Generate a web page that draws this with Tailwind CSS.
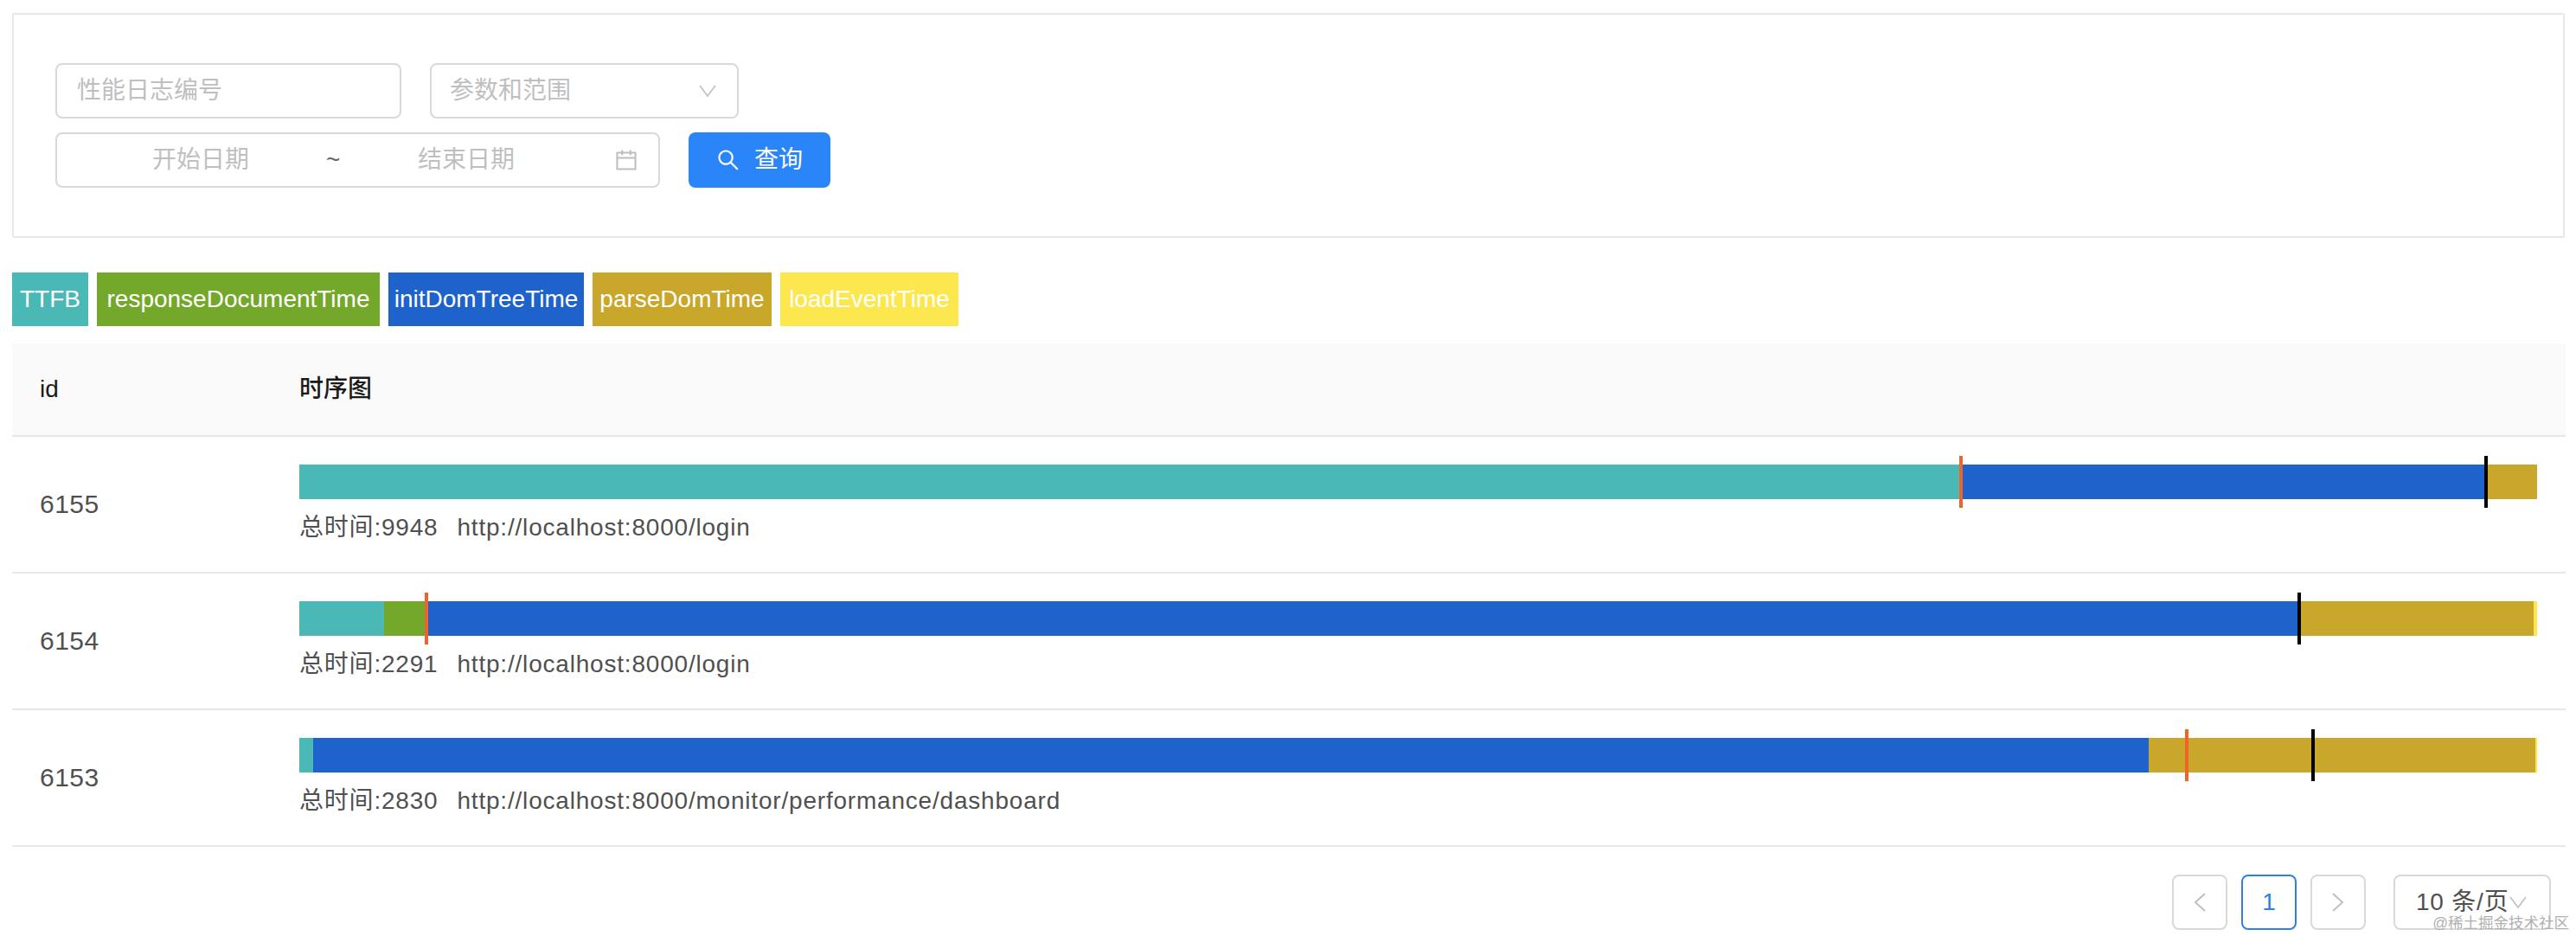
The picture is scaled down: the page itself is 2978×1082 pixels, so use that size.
<!DOCTYPE html>
<html lang="zh">
<head>
    <meta charset="UTF-8">
    <title>性能日志</title>
    <script src="https://cdn.jsdelivr.net/npm/@tailwindcss/browser@4"></script>
</head>
<body class="relative h-[1082px] overflow-hidden bg-white px-[14px] pt-[15px] text-[28px] leading-[40px] text-[#505050] font-['Liberation_Sans','Noto_Sans_CJK_SC',sans-serif]">

    <!-- Search form -->
    <div class="flex h-[260px] w-[2951px] flex-col gap-4 rounded-[2px] border-2 border-[#e8e8e8] pl-[48px] pt-[56px]">
        <div class="flex gap-[33px]">
            <div class="flex h-[64px] w-[400px] items-center rounded-lg border-2 border-[#d9d9d9] pl-[23px] text-[#bfbfbf]">性能日志编号</div>
            <div class="flex h-[64px] w-[357px] items-center justify-between rounded-lg border-2 border-[#d9d9d9] pl-[21px] pr-[24px] text-[#bfbfbf]">
                <span>参数和范围</span>
                <svg class="h-[14px] w-[20px]" viewBox="0 0 20 14" fill="none" stroke="#bfbfbf" stroke-width="1.6"><path d="M1 1l9 12 9-12"/></svg>
            </div>
        </div>
        <div class="flex gap-[33px]">
            <div class="flex h-[64px] w-[699px] items-center whitespace-nowrap rounded-lg border-2 border-[#d9d9d9] text-[#bfbfbf]">
                <span class="ml-[110px] w-[112px]">开始日期</span>
                <span class="ml-[89px] w-[18px] text-[#666]">~</span>
                <span class="ml-[88px] w-[112px]">结束日期</span>
                <svg class="ml-[116px] h-[26px] w-[26px]" viewBox="64 64 896 896" fill="#bfbfbf"><path d="M880 184H712v-64c0-4.4-3.6-8-8-8h-56c-4.4 0-8 3.6-8 8v64H384v-64c0-4.4-3.6-8-8-8h-56c-4.4 0-8 3.6-8 8v64H144c-17.7 0-32 14.3-32 32v664c0 17.7 14.3 32 32 32h736c17.7 0 32-14.3 32-32V216c0-17.7-14.3-32-32-32zm-40 656H184V460h656v380zM184 392V256h128v48c0 4.4 3.6 8 8 8h56c4.4 0 8-3.6 8-8v-48h256v48c0 4.4 3.6 8 8 8h56c4.4 0 8-3.6 8-8v-48h128v136H184z"/></svg>
            </div>
            <button class="flex h-[64px] w-[164px] items-center rounded-lg bg-[#2a85f8] pl-[33px] text-white">
                <svg class="h-[26px] w-[26px]" viewBox="64 64 896 896" fill="#fff"><path d="M909.6 854.5L649.9 594.8C690.2 542.7 712 479 712 412c0-80.2-31.3-155.4-87.9-212.1-56.6-56.7-132-87.9-212.1-87.9s-155.5 31.3-212.1 87.9C143.2 256.5 112 331.8 112 412c0 80.1 31.3 155.5 87.9 212.1C256.5 680.8 331.8 712 412 712c67 0 130.6-21.8 182.7-62l259.7 259.6a8.2 8.2 0 0 0 11.6 0l43.6-43.5a8.2 8.2 0 0 0 0-11.6zM570.4 570.4C528 612.7 471.8 636 412 636s-116-23.3-158.4-65.6C211.3 528 188 471.8 188 412s23.3-116.1 65.6-158.4C296 211.3 352.2 188 412 188s116.1 23.2 158.4 65.6S636 352.2 636 412s-23.3 116.1-65.6 158.4z"/></svg>
                <span class="ml-[17px]">查询</span>
            </button>
        </div>
    </div>

    <!-- Legend -->
    <div class="mt-[40px] flex h-[62px] gap-[10px] text-white">
        <span class="flex w-[88px] items-center justify-center bg-[#4ab9b5]">TTFB</span>
        <span class="flex w-[327px] items-center justify-center bg-[#73a82b]">responseDocumentTime</span>
        <span class="flex w-[226px] items-center justify-center bg-[#1e62cc]">initDomTreeTime</span>
        <span class="flex w-[207px] items-center justify-center bg-[#c9a72b]">parseDomTime</span>
        <span class="flex w-[206px] items-center justify-center bg-[#fde74f]">loadEventTime</span>
    </div>

    <!-- Table -->
    <div class="mt-[20px] w-[2952px]">
        <div class="flex h-[108px] items-center border-b-2 border-[#e8e8e8] bg-[#fafafa] font-medium text-[#1a1a1a]">
            <div class="w-[332px] pl-[32px]">id</div>
            <div>时序图</div>
        </div>

        <div class="flex h-[158px] items-center border-b-2 border-[#e8e8e8]">
            <div class="w-[332px] pl-[32px] text-[30px] tracking-[0.5px]">6155</div>
            <div class="self-start pt-[32px]">
                <div class="relative flex h-[40px] w-[2587px]">
                    <div class="w-[1920px] bg-[#4ab9b5]"></div>
                    <div class="w-[608px] bg-[#1e62cc]"></div>
                    <div class="w-[59px] bg-[#c9a72b]"></div>
                    <div class="absolute left-[1919px] top-[-10px] h-[60px] w-[4px] bg-[#f0632a]"></div>
                    <div class="absolute left-[2526px] top-[-10px] h-[60px] w-[4px] bg-black"></div>
                </div>
                <p class="mt-[13px] tracking-[0.8px]"><span>总时间:9948</span><span class="ml-[22px]">http://localhost:8000/login</span></p>
            </div>
        </div>

        <div class="flex h-[158px] items-center border-b-2 border-[#e8e8e8]">
            <div class="w-[332px] pl-[32px] text-[30px] tracking-[0.5px]">6154</div>
            <div class="self-start pt-[32px]">
                <div class="relative flex h-[40px] w-[2587px]">
                    <div class="w-[98px] bg-[#4ab9b5]"></div>
                    <div class="w-[47px] bg-[#73a82b]"></div>
                    <div class="w-[2167px] bg-[#1e62cc]"></div>
                    <div class="w-[271px] bg-[#c9a72b]"></div>
                    <div class="w-[4px] bg-[#fde74f]"></div>
                    <div class="absolute left-[145px] top-[-10px] h-[60px] w-[4px] bg-[#f0632a]"></div>
                    <div class="absolute left-[2310px] top-[-10px] h-[60px] w-[4px] bg-black"></div>
                </div>
                <p class="mt-[13px] tracking-[0.8px]"><span>总时间:2291</span><span class="ml-[22px]">http://localhost:8000/login</span></p>
            </div>
        </div>

        <div class="flex h-[158px] items-center border-b-2 border-[#e8e8e8]">
            <div class="w-[332px] pl-[32px] text-[30px] tracking-[0.5px]">6153</div>
            <div class="self-start pt-[32px]">
                <div class="relative flex h-[40px] w-[2587px]">
                    <div class="w-[16px] bg-[#4ab9b5]"></div>
                    <div class="w-[2122px] bg-[#1e62cc]"></div>
                    <div class="w-[447px] bg-[#c9a72b]"></div>
                    <div class="w-[2px] bg-[#fde74f]"></div>
                    <div class="absolute left-[2180px] top-[-10px] h-[60px] w-[4px] bg-[#f0632a]"></div>
                    <div class="absolute left-[2326px] top-[-10px] h-[60px] w-[4px] bg-black"></div>
                </div>
                <p class="mt-[13px] tracking-[0.8px]"><span>总时间:2830</span><span class="ml-[22px]">http://localhost:8000/monitor/performance/dashboard</span></p>
            </div>
        </div>
    </div>

    <!-- Pagination -->
    <div class="mt-[32px] flex w-[2935px] justify-end">
        <div class="flex h-[64px] w-[64px] items-center justify-center rounded-lg border-2 border-[#d9d9d9]">
            <svg class="h-[22px] w-[14px]" viewBox="0 0 14 22" fill="none" stroke="#bfbfbf" stroke-width="2"><path d="M13 1L2 11l11 10"/></svg>
        </div>
        <div class="ml-[16px] flex h-[64px] w-[64px] items-center justify-center rounded-lg border-2 border-[#2f80e4] text-[#2f80e4]">1</div>
        <div class="ml-[16px] flex h-[64px] w-[64px] items-center justify-center rounded-lg border-2 border-[#d9d9d9]">
            <svg class="h-[22px] w-[14px]" viewBox="0 0 14 22" fill="none" stroke="#bfbfbf" stroke-width="2"><path d="M1 1l11 10L1 21"/></svg>
        </div>
        <div class="ml-[32px] flex h-[64px] w-[182px] items-center rounded-lg border-2 border-[#d9d9d9] pl-[24px]">
            <span class="whitespace-nowrap tracking-[0.8px]">10 条/页</span>
            <svg class="h-[14px] w-[20px]" viewBox="0 0 20 14" fill="none" stroke="#bfbfbf" stroke-width="1.6"><path d="M1 1l9 12 9-12"/></svg>
        </div>
    </div>

    <!-- Watermark -->
    <div class="absolute right-[8px] top-[1053px] text-[17.5px] leading-[28px] text-[#b0b0b0]">@稀土掘金技术社区</div>

</body>
</html>
